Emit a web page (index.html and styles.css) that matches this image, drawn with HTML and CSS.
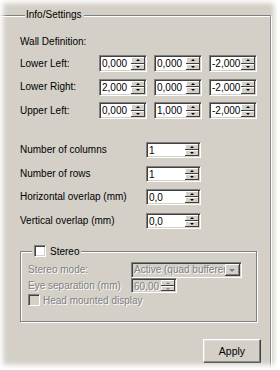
FILE: index.html
```html
<!DOCTYPE html>
<html lang="en">
<head>
    <meta charset="UTF-8">
    <title>Info/Settings</title>
    <link rel="stylesheet" href="styles.css">
</head>
<body>
    <div class="panel">
        <fieldset class="group">
            <legend>Info/Settings</legend>

            <div class="heading">Wall Definition:</div>
            <div class="vec-grid">
                <span class="lbl">Lower Left:</span>
                <div class="spin"><span class="val">0,000</span><span class="arrows"><i class="up"></i><i class="down"></i></span></div>
                <div class="spin"><span class="val">0,000</span><span class="arrows"><i class="up"></i><i class="down"></i></span></div>
                <div class="spin"><span class="val">-2,000</span><span class="arrows"><i class="up"></i><i class="down"></i></span></div>

                <span class="lbl">Lower Right:</span>
                <div class="spin"><span class="val">2,000</span><span class="arrows"><i class="up"></i><i class="down"></i></span></div>
                <div class="spin"><span class="val">0,000</span><span class="arrows"><i class="up"></i><i class="down"></i></span></div>
                <div class="spin"><span class="val">-2,000</span><span class="arrows"><i class="up"></i><i class="down"></i></span></div>

                <span class="lbl">Upper Left:</span>
                <div class="spin"><span class="val">0,000</span><span class="arrows"><i class="up"></i><i class="down"></i></span></div>
                <div class="spin"><span class="val">1,000</span><span class="arrows"><i class="up"></i><i class="down"></i></span></div>
                <div class="spin"><span class="val">-2,000</span><span class="arrows"><i class="up"></i><i class="down"></i></span></div>
            </div>

            <div class="param-grid">
                <span class="lbl">Number of columns</span>
                <div class="spin small"><span class="val">1</span><span class="arrows"><i class="up"></i><i class="down"></i></span></div>
                <span class="lbl">Number of rows</span>
                <div class="spin small"><span class="val">1</span><span class="arrows"><i class="up"></i><i class="down"></i></span></div>
                <span class="lbl">Horizontal overlap (mm)</span>
                <div class="spin small"><span class="val">0,0</span><span class="arrows"><i class="up"></i><i class="down"></i></span></div>
                <span class="lbl">Vertical overlap (mm)</span>
                <div class="spin small"><span class="val">0,0</span><span class="arrows"><i class="up"></i><i class="down"></i></span></div>
            </div>

            <fieldset class="stereo">
                <legend><span class="check"></span>Stereo</legend>
                <div class="stereo-grid">
                    <span class="lbl off">Stereo mode:</span>
                    <div class="combo"><span class="val">Active (quad buffered)</span><span class="drop"><i></i></span></div>
                    <span class="lbl off">Eye separation (mm)</span>
                    <div class="spin eye disabled"><span class="val">60,00</span><span class="arrows"><i class="up"></i><i class="down"></i></span></div>
                    <div class="hmd"><span class="check disabled"></span><span class="off">Head mounted display</span></div>
                </div>
            </fieldset>

            <div class="actions">
                <button class="btn">Apply</button>
            </div>
        </fieldset>
    </div>
</body>
</html>
```

FILE: styles.css
```css
html, body {
    margin: 0;
    background-color: #fff;
}
body {
    font-family: 'Liberation Sans', Arial, sans-serif;
    font-size: 10px;
    color: #000;
    overflow: hidden;
}
.panel {
    position: relative;
    width: 277px;
    height: 368px;
    background-color: #d4d0c8;
    overflow: hidden;
}
/* soft white edge of the captured window */
.panel::after {
    content: "";
    position: absolute;
    inset: 0;
    box-shadow: inset 0 0 5px 3px #fff;
    pointer-events: none;
}
.group {
    box-sizing: border-box;
    width: 273px;
    height: 360px;
    margin: 9px 0 0 -2px;
    padding: 0 0 0 21px;
    border: 1px solid #808080;
    box-shadow: inset 1px 1px #fff, 1px 1px #fff;
    min-width: 0;
}
.group > legend {
    margin-left: 5px;
    padding: 0 2px 0 1px;
    line-height: 12px;
    background-color: #d4d0c8;
}
.heading {
    margin-top: 15px;
    line-height: 12px;
}
.lbl {
    line-height: 12px;
    white-space: nowrap;
}
.off {
    color: #808080;
    text-shadow: 1px 1px 0 #fff;
}
.vec-grid {
    display: grid;
    grid-template-columns: 72px 48px 48px 48px;
    grid-auto-rows: 17px;
    column-gap: 7px;
    row-gap: 6.5px;
    align-items: center;
    margin-top: 7px;
}
.param-grid {
    display: grid;
    grid-template-columns: 126px 55px;
    grid-auto-rows: 16px;
    row-gap: 7.5px;
    align-items: center;
    margin-top: 23px;
}

/* spin box */
.spin {
    box-sizing: border-box;
    display: flex;
    height: 17px;
    background-color: #fff;
    border: 1px solid;
    border-color: #808080 #fff #fff #808080;
    box-shadow: inset 1px 1px #404040, inset -1px -1px #d4d0c8;
}
.spin.small {
    height: 16px;
}
.spin .val {
    flex: 1;
    min-width: 0;
    overflow: hidden;
    padding: 1px 0 0 2px;
    line-height: 13px;
    font-size: 10px;
    white-space: nowrap;
}
.arrows {
    display: flex;
    flex-direction: column;
    width: 14px;
    padding: 1px 1px 1px 0;
}
.arrows i {
    position: relative;
    flex: 1;
    background-color: #d4d0c8;
    box-shadow: inset -1px -1px #404040, inset 1px 1px #fff;
}
.arrows i::after {
    content: "";
    position: absolute;
    left: 5px;
    border-left: 2px solid transparent;
    border-right: 2px solid transparent;
}
.arrows .up::after {
    top: 2px;
    border-bottom: 2px solid #000;
}
.arrows .down::after {
    top: 2px;
    border-top: 2px solid #000;
}
.spin.disabled {
    background-color: #d4d0c8;
    color: #808080;
}
.spin.disabled .val {
    text-shadow: 1px 1px 0 #fff;
}
.spin.disabled .arrows i::after {
    border-top-color: #808080;
    border-bottom-color: #808080;
}
.spin.eye {
    width: 46px;
    height: 15px;
}

/* checkbox */
.check {
    display: inline-block;
    box-sizing: border-box;
    width: 12px;
    height: 12px;
    vertical-align: middle;
    background-color: #fff;
    border: 1px solid;
    border-color: #808080 #fff #fff #808080;
    box-shadow: inset 1px 1px #404040, inset -1px -1px #d4d0c8;
}
.check.disabled {
    background-color: #d4d0c8;
}

/* stereo group */
.stereo {
    box-sizing: border-box;
    width: 237px;
    height: 77px;
    margin: 16px 0 0 0;
    padding: 0 0 0 7px;
    border: 1px solid #808080;
    box-shadow: inset 1px 1px #fff, 1px 1px #fff;
    min-width: 0;
}
.stereo > legend {
    margin-left: 4px;
    padding: 0 2px;
    line-height: 13px;
    background-color: #d4d0c8;
}
.stereo > legend .check {
    margin-right: 4px;
    position: relative;
    top: -1px;
}
.stereo-grid {
    display: grid;
    grid-template-columns: 103px 111px;
    grid-template-rows: 16px 16px 13px;
    row-gap: 5px 2px;
    align-items: center;
    margin-top: 4px;
}
.combo {
    box-sizing: border-box;
    display: flex;
    height: 16px;
    background-color: #d4d0c8;
    border: 1px solid;
    border-color: #808080 #fff #fff #808080;
    box-shadow: inset 1px 1px #404040, inset -1px -1px #d4d0c8;
    color: #808080;
}
.combo .val {
    flex: 1;
    min-width: 0;
    overflow: hidden;
    white-space: nowrap;
    padding: 1px 0 0 2px;
    line-height: 12px;
    text-shadow: 1px 1px 0 #fff;
}
.drop {
    position: relative;
    width: 15px;
    margin: 1px 1px 1px 0;
    background-color: #d4d0c8;
    box-shadow: inset -1px -1px #404040, inset 1px 1px #fff, inset -2px -2px #808080;
}
.drop i {
    position: absolute;
    left: 4px;
    top: 5px;
    border-left: 3px solid transparent;
    border-right: 3px solid transparent;
    border-top: 3px solid #808080;
}
.hmd {
    grid-column: 1 / 3;
    display: flex;
    align-items: center;
    gap: 3px;
    white-space: nowrap;
}

.actions {
    display: flex;
    justify-content: flex-end;
    padding-right: 9px;
    margin-top: 17px;
}
.btn {
    box-sizing: border-box;
    width: 58px;
    height: 24px;
    padding: 0;
    font-family: inherit;
    font-size: 10.5px;
    color: #000;
    background-color: #d4d0c8;
    border: 1px solid;
    border-color: #fff #404040 #404040 #fff;
    box-shadow: inset -1px -1px #808080, inset 1px 1px #dfdfdf;
}
```
